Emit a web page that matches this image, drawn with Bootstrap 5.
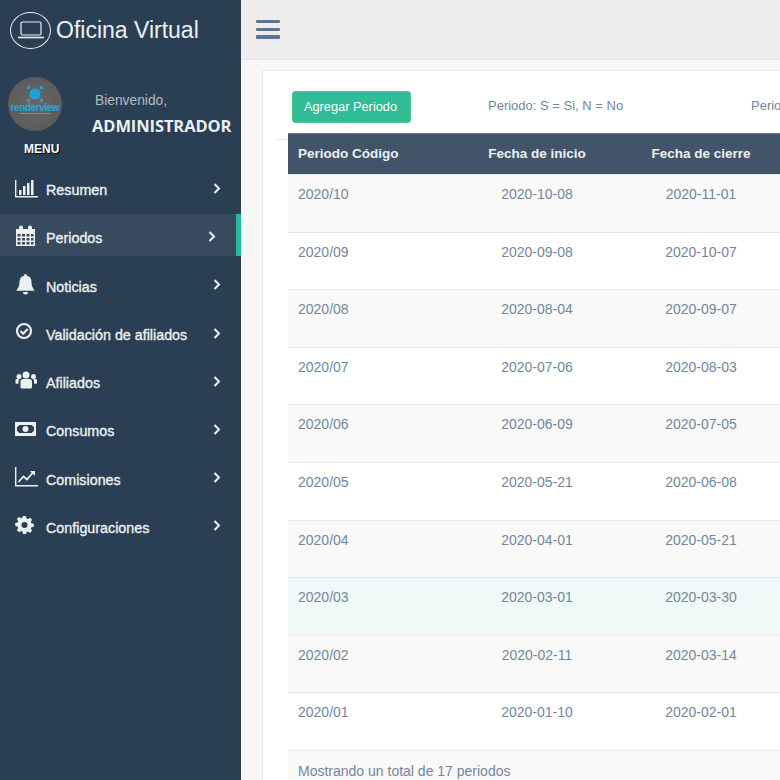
<!DOCTYPE html>
<html lang="es">
<head>
  <meta charset="UTF-8" />
  <meta name="viewport" content="width=device-width, initial-scale=1.0" />
  <title>Oficina Virtual</title>
  <link href="https://cdn.jsdelivr.net/npm/bootstrap@5.3.3/dist/css/bootstrap.min.css" rel="stylesheet" />
  <style>
    html, body { height: 100%; overflow: hidden; }
    body { font-family: "Liberation Sans", Arial, sans-serif; font-size: 13px; color: #73879c; background: #f7f7f7; }
    .app-shell { width: 780px; height: 780px; overflow: hidden; }

    .side-panel { width: 241px; flex: none; background: #2a3f54; color: #ecf0f1; }
    .brand-row { height: 60px; padding-left: 10px; gap: 5px; }
    .brand-ring { width: 41px; height: 37px; border: 1.5px solid #ecf0f1; border-radius: 50%; }
    .brand-name { font-size: 23px; color: #ecf0f1; }
    .profile-row { height: 65px; margin-top: 17px; padding-left: 8px; }
    .logo-disc { width: 54px; height: 54px; border-radius: 50%; background: radial-gradient(circle, #666 0%, #585858 100%); flex: none; }
    .logo-word { font-size: 10px; line-height: 9px; color: #22a7e6; font-weight: 700; letter-spacing: -.4px; }
    .logo-sub { width: 30px; height: 1px; background: #8a8a8a; margin-top: 1px; }
    .profile-text { padding: 1px 0 0 30px; }
    .hello-text { color: #b4bbc2; font-size: 13.8px; line-height: 20px; padding-left: 3px; margin-top: 13px; }
    .admin-text { font-family: "Open Sans", sans-serif; font-size: 16.5px; font-weight: 700; color: #ecf0f1; line-height: 24px; margin-top: 3px; letter-spacing: -.1px; white-space: nowrap; }
    .menu-title { font-size: 12px; font-weight: 700; color: #fff; text-shadow: 1px 1px 1px #000; padding-left: 24px; line-height: 14px; }
    .nav-stack { margin-top: 10px; }
    .nav-line { height: 48.2px; color: #ecf0f1; font-size: 14.3px; -webkit-text-stroke: .35px #ecf0f1; padding: 2px 0 0 15px; text-decoration: none; position: relative; }
    .nav-line .nav-ico { width: 23px; height: 23px; flex: none; margin-right: 8px; margin-top: -6px; fill: #ecf0f1; }
    .nav-line .nav-arrow { position: absolute; left: 213px; top: 17px; width: 8px; height: 11px; fill: none; stroke: #ecf0f1; stroke-width: 2; }
    .nav-line.is-active { background: #374a5e; height: 42px; margin-bottom: 6.2px; padding-top: 8px; border-right: 5px solid #26b99a; }
    .nav-line.is-active .nav-arrow { left: 208px; top: 17px; }

    .main-area { min-width: 0; flex: 1; }
    .top-strip { height: 60px; background: #ededed; border-bottom: 1px solid #e4e7ea; padding: 20px 0 0 15px; }
    .burger-bar { width: 24px; height: 3.4px; background: #5a738e; border-radius: 1px; margin-bottom: 4.3px; }
    .sheet { margin: 10px 0 0 21px; background: #fff; border: 1px solid #e6e9ed; height: 720px; width: 560px; padding: 20px 0 0 29px; }
    .btn-add { width: 119px; height: 32px; background: #2fbc96; border: 1px solid #4fcb8c; color: #fff; font-size: 12.8px; padding: 0 2px 0 0; border-radius: 3px; flex: none; }
    .legend-one { margin-left: 77px; width: 263px; flex: none; }
    .legend-text { white-space: nowrap; padding-top: 5px; }
    .tools-row { height: 42px; }
    .rule-stub { height: 1px; width: 12px; background: #e6e9ed; margin: 6px 0 -7px -16px; }
    .period-table { table-layout: fixed; width: 640px; margin: 0 0 0 -1px; color: #73879c; font-size: 14px; }
    .period-table th, .period-table td { padding: 10px; vertical-align: top; border: 0; }
    .period-table thead th { height: 40px; background: #41546a; color: #ecf0f1; font-weight: 700; font-size: 13.5px; line-height: 20px; border-top: 1px solid #66758a; border-bottom: 1px solid #e0e3e6; }
    .period-table tbody td { height: 57.6px; padding-top: 9px; background: #fff; color: #73879c; border-bottom: 1.5px solid #e6e9ed; line-height: 20px; }
    .period-table tbody tr:nth-child(odd) td { background: #f9f9f9; }
    .period-table tbody tr.row-hover td { background: #eff9f7; border-bottom-color: #e9f3f1; }
    .period-table tfoot td { background: #f9f9f9; color: #73879c; height: 40px; }
    .table-holder { margin-left: -4px; border-left: 1px solid #e6e9ed; }
  </style>
</head>
<body>
  <div class="app-shell d-flex">
    <aside class="side-panel">
      <div class="brand-row d-flex align-items-center">
        <span class="brand-ring d-flex align-items-center justify-content-center">
          <svg width="26" height="18" viewBox="0 0 26 18" fill="none" stroke="#ecf0f1" stroke-width="1.2"><rect x="3" y="1" width="20" height="13" rx="1.500"/><path d="M0 16.500h26" stroke-width="1.600"/></svg>
        </span>
        <span class="brand-name">Oficina Virtual</span>
      </div>

      <div class="profile-row d-flex">
        <div class="logo-disc d-flex flex-column align-items-center">
          <svg class="mt-2" width="18" height="18" viewBox="0 0 18 18" fill="#1f9fe4"><circle cx="9" cy="9" r="5.500"/><rect x="1" y="1" width="3" height="3"/><rect x="14" y="1" width="3" height="3"/><rect x="1" y="14" width="3" height="3"/><rect x="14" y="14" width="3" height="3"/></svg>
          <span class="logo-word">renderview</span>
          <span class="logo-sub"></span>
        </div>
        <div class="profile-text">
          <div class="hello-text">Bienvenido,</div>
          <div class="admin-text">ADMINISTRADOR</div>
        </div>
      </div>
      <div class="menu-title">MENU</div>

      <nav class="nav-stack">
        <a class="nav-line d-flex align-items-center" href="#">
          <svg class="nav-ico" viewBox="0 0 23 23"><path d="M0 3h1.400v16H23v1.400H0z"/><rect x="4" y="13" width="2.500" height="5"/><rect x="8" y="9" width="2.500" height="9"/><rect x="12" y="6" width="2.500" height="12"/><rect x="16" y="3" width="2.500" height="15"/></svg>
          Resumen
          <svg class="nav-arrow" viewBox="0 0 8 11"><path d="M1.500 1l4.500 4.500L1.500 10"/></svg>
        </a>
        <a class="nav-line is-active d-flex align-items-center" href="#">
          <svg class="nav-ico" viewBox="0 0 23 23"><path fill-rule="evenodd" d="M1 4h3V2.500a2 2 0 0 1 4 0V4h5V2.500a2 2 0 0 1 4 0V4h3v17H1zM2.500 9v2.500h3V9zm4.500 0v2.500h3V9zm4.500 0v2.500h3V9zm4.500 0v2.500h2.500V9zM2.500 13v2.500h3V13zm4.500 0v2.500h3V13zm4.500 0v2.500h3V13zm4.500 0v2.500h2.500V13zM2.500 17v2.500h3V17zm4.500 0v2.500h3V17zm4.500 0v2.500h3V17zm4.500 0v2.500h2.500V17z"/></svg>
          Periodos
          <svg class="nav-arrow" viewBox="0 0 8 11"><path d="M1.500 1l4.500 4.500L1.500 10"/></svg>
        </a>
        <a class="nav-line d-flex align-items-center" href="#">
          <svg class="nav-ico" viewBox="0 0 23 23"><path d="M10.500 1a1.500 1.500 0 0 1 1.500 1.700c3 .6 4.500 3 4.500 6 0 4 1 6 2.800 8v1H1.700v-1c1.800-2 2.800-4 2.800-8 0-3 1.500-5.400 4.500-6A1.500 1.500 0 0 1 10.500 1zM8 19h5a2.500 2.500 0 0 1-5 0z"/></svg>
          Noticias
          <svg class="nav-arrow" viewBox="0 0 8 11"><path d="M1.500 1l4.500 4.500L1.500 10"/></svg>
        </a>
        <a class="nav-line d-flex align-items-center" href="#">
          <svg class="nav-ico" viewBox="0 0 23 23"><circle cx="9" cy="10" r="7" fill="none" stroke="#ecf0f1" stroke-width="2.200"/><path d="M5.500 10l2.700 2.700 4.500-4.700" fill="none" stroke="#ecf0f1" stroke-width="2.200"/></svg>
          Validación de afiliados
          <svg class="nav-arrow" viewBox="0 0 8 11"><path d="M1.500 1l4.500 4.500L1.500 10"/></svg>
        </a>
        <a class="nav-line d-flex align-items-center" href="#">
          <svg class="nav-ico" viewBox="0 0 23 23"><circle cx="11" cy="6" r="3.500"/><circle cx="4" cy="7.500" r="2.500"/><circle cx="18.500" cy="7.500" r="2.500"/><path d="M5.500 12.500c0-1.500 1-2.500 2.500-2.500h6.500c1.500 0 2.500 1 2.500 2.500V18c0 1-.8 1.500-1.500 1.500H7c-.8 0-1.500-.5-1.500-1.500zM0.500 11.500c0-1 .8-1.800 2-1.800h2c-.6.8-1 1.700-1 3v2H1.500c-.6 0-1-.4-1-1zM22 11.500c0-1-.8-1.800-2-1.800h-2c.6.8 1 1.700 1 3v2h2c.6 0 1-.4 1-1z"/></svg>
          Afiliados
          <svg class="nav-arrow" viewBox="0 0 8 11"><path d="M1.500 1l4.500 4.500L1.500 10"/></svg>
        </a>
        <a class="nav-line d-flex align-items-center" href="#">
          <svg class="nav-ico" viewBox="0 0 23 23"><path fill-rule="evenodd" d="M0 4h21v14H0zM4 7a2.500 2.500 0 0 1-2 2v4a2.500 2.500 0 0 1 2 2h13a2.500 2.500 0 0 1 2-2V9a2.500 2.500 0 0 1-2-2z"/><circle cx="10.500" cy="11" r="3"/></svg>
          Consumos
          <svg class="nav-arrow" viewBox="0 0 8 11"><path d="M1.500 1l4.500 4.500L1.500 10"/></svg>
        </a>
        <a class="nav-line d-flex align-items-center" href="#">
          <svg class="nav-ico" viewBox="0 0 23 23"><path d="M0 1h1.400v18H23v1.400H0z"/><path d="M3.500 16l5-5.500 3.500 3L17.500 7" fill="none" stroke="#ecf0f1" stroke-width="1.800"/><path d="M15 5h5v5z"/></svg>
          Comisiones
          <svg class="nav-arrow" viewBox="0 0 8 11"><path d="M1.500 1l4.500 4.500L1.500 10"/></svg>
        </a>
        <a class="nav-line d-flex align-items-center" href="#">
          <svg class="nav-ico" viewBox="0 0 23 23"><path fill-rule="evenodd" d="M8 2h3l.5 2.400 1.400.6 2.100-1.300 2.100 2.100-1.300 2.100.6 1.400 2.400.5v3l-2.400.5-.6 1.400 1.300 2.100-2.100 2.100-2.100-1.300-1.400.6L11 20H8l-.5-2.400-1.400-.6L4 18.300l-2.100-2.100L3.200 14l-.6-1.400L.200 12.100v-3l2.400-.5.6-1.400L1.900 5l2.100-2.100L6.100 4.200l1.400-.6zM9.500 8a3 3 0 1 0 0 6 3 3 0 0 0 0-6z"/></svg>
          Configuraciones
          <svg class="nav-arrow" viewBox="0 0 8 11"><path d="M1.500 1l4.500 4.500L1.500 10"/></svg>
        </a>
      </nav>
    </aside>

    <main class="main-area">
      <div class="top-strip">
        <div class="burger-bar"></div>
        <div class="burger-bar"></div>
        <div class="burger-bar"></div>
      </div>
      <div class="sheet">
        <div class="tools-row d-flex">
          <button type="button" class="btn btn-add">Agregar Periodo</button>
          <div class="legend-one legend-text">Periodo: S = Si, N = No</div>
          <div class="legend-text">Periodo</div>
        </div>
        <div class="rule-stub"></div>
        <div class="table-holder">
          <table class="table period-table">
            <colgroup><col style="width:167px"><col style="width:164px"><col style="width:164px"><col></colgroup>
            <thead>
              <tr><th>Periodo Código</th><th class="text-center">Fecha de inicio</th><th class="text-center">Fecha de cierre</th><th></th></tr>
            </thead>
            <tbody id="filas"></tbody>
            <tfoot><tr><td colspan="4">Mostrando un total de 17 periodos</td></tr></tfoot>
          </table>
        </div>
      </div>
    </main>
  </div>

  <script>
    const periodos = [
      ['2020/10', '2020-10-08', '2020-11-01'],
      ['2020/09', '2020-09-08', '2020-10-07'],
      ['2020/08', '2020-08-04', '2020-09-07'],
      ['2020/07', '2020-07-06', '2020-08-03'],
      ['2020/06', '2020-06-09', '2020-07-05'],
      ['2020/05', '2020-05-21', '2020-06-08'],
      ['2020/04', '2020-04-01', '2020-05-21'],
      ['2020/03', '2020-03-01', '2020-03-30'],
      ['2020/02', '2020-02-11', '2020-03-14'],
      ['2020/01', '2020-01-10', '2020-02-01']
    ];
    document.getElementById('filas').innerHTML = periodos.map(p =>
      `<tr class="${p[0] === '2020/03' ? 'row-hover' : ''}"><td>${p[0]}</td><td class="text-center">${p[1]}</td><td class="text-center">${p[2]}</td><td></td></tr>`
    ).join('');
  </script>
  <script src="https://cdn.jsdelivr.net/npm/bootstrap@5.3.3/dist/js/bootstrap.bundle.min.js"></script>
</body>
</html>
